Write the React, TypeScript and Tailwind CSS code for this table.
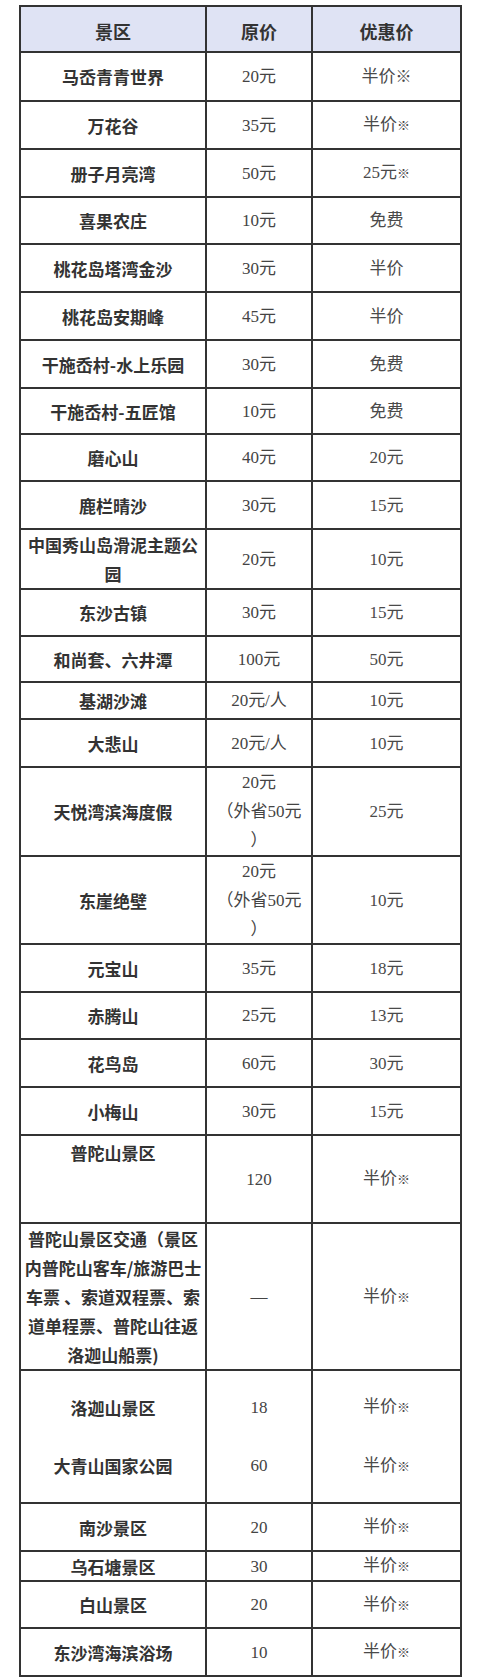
import React from 'react';

type Row = {
  name: string[];
  price: string[];
  deal: string[];
  h: string;
  nameTop?: boolean;
};

const rows: Row[] = [
  { name: ['马岙青青世界'], price: ['20元'], deal: ['半价※'], h: 'h-[49px]' },
  { name: ['万花谷'], price: ['35元'], deal: ['半价※'], h: 'h-[48px]' },
  { name: ['册子月亮湾'], price: ['50元'], deal: ['25元※'], h: 'h-[48px]' },
  { name: ['喜果农庄'], price: ['10元'], deal: ['免费'], h: 'h-[47px]' },
  { name: ['桃花岛塔湾金沙'], price: ['30元'], deal: ['半价'], h: 'h-[48px]' },
  { name: ['桃花岛安期峰'], price: ['45元'], deal: ['半价'], h: 'h-[48px]' },
  { name: ['干施岙村-水上乐园'], price: ['30元'], deal: ['免费'], h: 'h-[48px]' },
  { name: ['干施岙村-五匠馆'], price: ['10元'], deal: ['免费'], h: 'h-[46px]' },
  { name: ['磨心山'], price: ['40元'], deal: ['20元'], h: 'h-[47px]' },
  { name: ['鹿栏晴沙'], price: ['30元'], deal: ['15元'], h: 'h-[48px]' },
  { name: ['中国秀山岛滑泥主题公', '园'], price: ['20元'], deal: ['10元'], h: 'h-[60px]' },
  { name: ['东沙古镇'], price: ['30元'], deal: ['15元'], h: 'h-[47px]' },
  { name: ['和尚套、六井潭'], price: ['100元'], deal: ['50元'], h: 'h-[46px]' },
  { name: ['基湖沙滩'], price: ['20元/人'], deal: ['10元'], h: 'h-[37px]' },
  { name: ['大悲山'], price: ['20元/人'], deal: ['10元'], h: 'h-[48px]' },
  { name: ['天悦湾滨海度假'], price: ['20元', '（外省50元', '）'], deal: ['25元'], h: 'h-[89px]' },
  { name: ['东崖绝壁'], price: ['20元', '（外省50元', '）'], deal: ['10元'], h: 'h-[88px]' },
  { name: ['元宝山'], price: ['35元'], deal: ['18元'], h: 'h-[48px]' },
  { name: ['赤腾山'], price: ['25元'], deal: ['13元'], h: 'h-[47px]' },
  { name: ['花鸟岛'], price: ['60元'], deal: ['30元'], h: 'h-[48px]' },
  { name: ['小梅山'], price: ['30元'], deal: ['15元'], h: 'h-[48px]' },
  { name: ['普陀山景区'], price: ['120'], deal: ['半价※'], h: 'h-[88px]', nameTop: true },
  {
    name: ['普陀山景区交通（景区', '内普陀山客车/旅游巴士', '车票 、索道双程票、索', '道单程票、普陀山往返', '洛迦山船票)'],
    price: ['—'],
    deal: ['半价※'],
    h: 'h-[147px]',
  },
  { name: ['洛迦山景区', '\u00a0', '大青山国家公园'], price: ['18', '\u00a0', '60'], deal: ['半价※', '\u00a0', '半价※'], h: 'h-[133px]' },
  { name: ['南沙景区'], price: ['20'], deal: ['半价※'], h: 'h-[48px]' },
  { name: ['乌石塘景区'], price: ['30'], deal: ['半价※'], h: 'h-[30px]' },
  { name: ['白山景区'], price: ['20'], deal: ['半价※'], h: 'h-[47px]' },
  { name: ['东沙湾海滨浴场'], price: ['10'], deal: ['半价※'], h: 'h-[46px]' },
];

// the reference mark after 半价 is set smaller than the text
function withMark(text: string, big: boolean) {
  if (!text.endsWith('※')) return text;
  return (
    <>
      {text.slice(0, -1)}
      <span className={big ? 'text-[16px]' : 'text-[13px]'}>※</span>
    </>
  );
}

function Lines({ lines, mark }: { lines: string[]; mark?: boolean }) {
  return (
    <div className="leading-[29px]">
      {lines.map((l, i) => (
        <div key={i} className="whitespace-nowrap">
          {mark ? withMark(l, false) : l}
        </div>
      ))}
    </div>
  );
}

export default function App() {
  return (
    <div className="w-[480px] bg-white pt-[5px] pl-[19px]">
      <div className="w-[443px] border-2 border-[#333]">
        {/* header */}
        <div className="flex h-[46px] border-b-2 border-[#333] bg-[#dfe3f4] font-['Noto_Sans_CJK_SC',sans-serif] text-[18px] font-bold text-[#333]">
          <div className="flex w-[186px] items-center justify-center border-r-2 border-[#333] pt-[4px]">景区</div>
          <div className="flex w-[106px] items-center justify-center border-r-2 border-[#333] pt-[4px]">原价</div>
          <div className="flex flex-1 items-center justify-center pt-[4px]">优惠价</div>
        </div>

        {rows.map((r, i) => (
          <div
            key={i}
            className={`flex ${r.h} ${i < rows.length - 1 ? 'border-b-2 border-[#333]' : ''}`}
          >
            <div
              className={`flex w-[186px] justify-center border-r-2 border-[#333] text-center font-['Noto_Sans_CJK_SC',sans-serif] text-[17px] font-bold text-[#333] ${
                r.nameTop ? 'items-start pt-[2px]' : 'items-center'
              }`}
            >
              <Lines lines={r.name} />
            </div>
            <div className="flex w-[106px] items-center justify-center border-r-2 border-[#333] text-center font-['Liberation_Serif','Noto_Sans_CJK_SC',serif] text-[17px] text-[#444]">
              <Lines lines={r.price} />
            </div>
            <div className="flex flex-1 items-center justify-center text-center font-['Liberation_Serif','Noto_Sans_CJK_SC',serif] text-[17px] text-[#4a4a4a]">
              {i === 0 ? (
                <div className="leading-[29px]">{withMark(r.deal[0], true)}</div>
              ) : (
                <Lines lines={r.deal} mark />
              )}
            </div>
          </div>
        ))}
      </div>
    </div>
  );
}
